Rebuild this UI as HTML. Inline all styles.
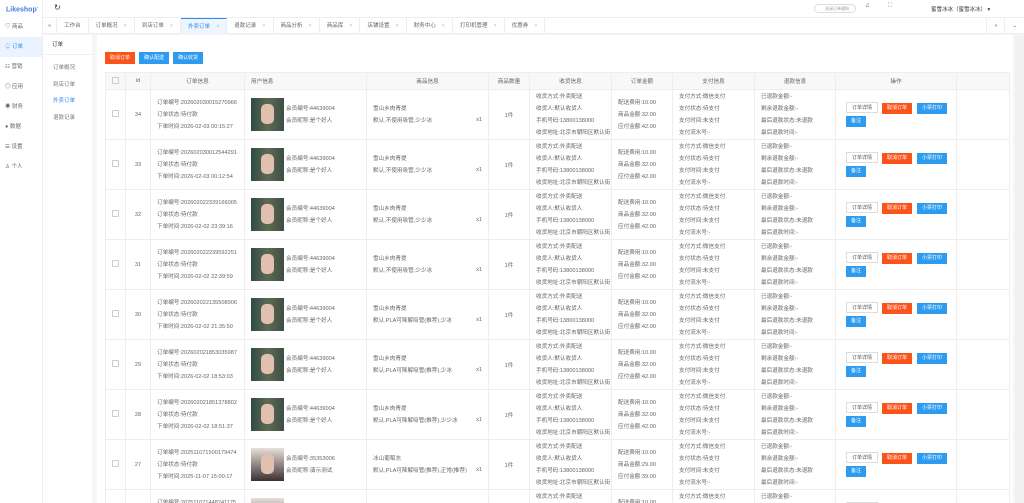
<!DOCTYPE html><html style="height:503px;overflow:hidden"><head><meta charset="utf-8"><style>
*{box-sizing:border-box;margin:0;padding:0}
body{width:1024px;height:503px;overflow:hidden;background:#f5f6f8;font-family:"Liberation Sans","Noto Sans CJK SC",sans-serif;color:#555;font-size:5.5px;position:relative}
.abs{position:absolute}
#side{left:0;top:0;width:43px;height:503px;background:#fff;border-right:1px solid #eee}
#side .logo{height:17px;color:#4a7ae0;font-weight:bold;font-size:7px;padding:5px 0 0 6px}
#side .it{height:20px;line-height:20px;padding-left:5px;color:#666;font-size:5.5px}
#side .it.on{background:#eaf3ff;color:#2d8cf0}
#top{left:43px;top:0;right:0;height:17px;background:#fff}
#tabs{left:43px;top:17px;right:0;height:17px;background:#fff;border-top:1px solid #eee;border-bottom:1px solid #eee;display:flex}
#tabs div{height:16px;line-height:16px;padding:0 7px;border-right:1px solid #eee;color:#666;font-size:5.5px;white-space:nowrap}
#tabs div.on{color:#2d8cf0;background:#eef5ff;border-top:1px solid #2d8cf0}
#tabs span{color:#bbb;margin-left:6px}
#sub{left:43px;top:35px;width:49px;height:468px;background:#fff}
#sub .h{height:20px;line-height:20px;padding-left:9px;color:#333;border-bottom:1px solid #f0f0f0}
#sub .s{height:16.5px;line-height:16.5px;padding-left:10px;color:#777}
#main{left:97px;top:35px;width:916px;height:468px;background:#fff}
#sb{left:1015px;top:35px;width:9px;height:468px;background:#f1f1f1}
.btn{position:absolute;height:12px;line-height:12px;color:#fff;font-size:5px;padding:0 5px}
#wrap{position:absolute;left:0;top:0;width:1024px;height:503px;overflow:hidden}
table{position:absolute;left:105px;top:72px;border-collapse:collapse;table-layout:fixed;width:904px}
td,th{border:1px solid #eee;font-weight:normal;font-size:5.6px;color:#666;vertical-align:middle;white-space:nowrap;overflow:hidden}
th{background:#f8f8f9;height:17px;text-align:center;color:#666}
td{height:50px}
.l{line-height:12px;padding-left:6px}
.cb{display:inline-block;width:7px;height:7px;border:1px solid #ccc;border-radius:1px}
.av{display:inline-block;width:33px;height:33px;background:linear-gradient(90deg,#2f4a48,#5e6a52 50%,#3e4e46);vertical-align:middle;position:relative}
.av i{position:absolute;left:10px;top:6px;width:13px;height:20px;background:#e2c0b0;border-radius:5px}
.op span{display:inline-block;height:11px;line-height:11px;padding:0 5px;font-size:5px;color:#fff;margin:1px 0}
</style></head><body>
<div id="wrap">
<div id="side" class="abs"><div class="logo">Likeshop<sup style="font-size:3px">+</sup></div>
<div class="it">♡ 商品</div><div class="it on">♤ 订单</div><div class="it">☷ 营销</div><div class="it">◎ 应用</div><div class="it">◉ 财务</div><div class="it">● 数据</div><div class="it">☰ 设置</div><div class="it">♙ 个人</div></div>
<div id="top" class="abs"><span class="abs" style="left:11px;top:3px;font-size:8px;color:#333">↻</span>
<span class="abs" style="left:771px;top:4px;width:42px;height:9px;border:1px solid #ddd;border-radius:5px;font-size:4px;line-height:8px;padding-left:10px;color:#999;white-space:nowrap">关闭订单通知</span>
<span class="abs" style="left:822px;top:3px;font-size:6px;color:#555">♫</span><span class="abs" style="left:845px;top:3px;font-size:6px;color:#888">⛶</span>
<span class="abs" style="left:888px;top:5px;font-size:5.5px;color:#333;white-space:nowrap">蜜雪冰冰（蜜雪冰冰） ▾</span></div>
<div id="tabs" class="abs"><div style="padding:0 5px">«</div><div>工作台</div><div>订单概况<span>×</span></div><div>到店订单<span>×</span></div><div class="on">外卖订单<span>×</span></div><div>退款记录<span>×</span></div><div>商品分析<span>×</span></div><div>商品库<span>×</span></div><div>店铺设置<span>×</span></div><div>财务中心<span>×</span></div><div>打印机管理<span>×</span></div><div>优惠券<span>×</span></div>
<div style="margin-left:auto;border-left:1px solid #eee">»</div><div style="border-right:0">⌄</div></div>
<div id="sub" class="abs"><div class="h">订单</div><div style="height:5px"></div><div class="s">订单概况</div><div class="s">到店订单</div><div class="s" style="color:#2d8cf0">外卖订单</div><div class="s">退款记录</div></div>
<div id="main" class="abs"></div><div id="sb" class="abs"></div>
<div class="btn" style="left:105px;top:52px;background:#fa541c">取消订单</div>
<div class="btn" style="left:139px;top:52px;background:#2d9cf0">确认配送</div>
<div class="btn" style="left:173px;top:52px;background:#2d9cf0">确认收货</div>
<table id="t"><colgroup><col style="width:20px"><col style="width:25px"><col style="width:94px"><col style="width:122px"><col style="width:122px"><col style="width:41px"><col style="width:82px"><col style="width:61px"><col style="width:82px"><col style="width:81px"><col style="width:121px"><col style="width:53px"></colgroup>
<tr><th><span class="cb"></span></th><th>id</th><th>订单信息</th><th style="text-align:left;padding-left:6px">用户信息</th><th>商品信息</th><th>商品数量</th><th>收货信息</th><th>订单金额</th><th>支付信息</th><th>退款信息</th><th>操作</th><th></th></tr>
</table>
</div>
<script>
var d=[[34,"202602030015270966","2026-02-03 00:15:27","默认,不使用吸管,少少冰"],[33,"202602030012544291","2026-02-03 00:12:54","默认,不使用吸管,少少冰"],[32,"202602022339166005","2026-02-02 23:39:16","默认,不使用吸管,少少冰"],[31,"202602022239592251","2026-02-02 22:39:59","默认,不使用吸管,少少冰"],[30,"202602022135508906","2026-02-02 21:35:50","默认,PLA可降解吸管(推荐),少冰"],[29,"202602021853035987","2026-02-02 18:53:03","默认,PLA可降解吸管(推荐),少冰"],[28,"202602021851378802","2026-02-02 18:51:37","默认,PLA可降解吸管(推荐),少少冰"],[27,"202511071500179474","2025-11-07 15:00:17","默认,PLA可降解吸管(推荐),正常(推荐)"],[26,"202511071448241175","2025-11-07 14:48:24","默认,PLA可降解吸管(推荐),正常(推荐)"]];
var h="";d.forEach(function(r){var g=r[0]<=27;h+='<tr><td style="text-align:center"><span class="cb"></span></td><td style="text-align:center">'+r[0]+'</td><td class="l">订单编号:'+r[1]+'<br>订单状态:待付款<br>下单时间:'+r[2]+'</td><td style="padding-left:6px"><span class="av" style="'+(g?'background:linear-gradient(#e8e0dc,#3a3030)':'')+'"><i></i></span><span style="display:inline-block;vertical-align:middle;line-height:12px;margin-left:2px">会员编号:'+(g?'35353006':'44639004')+'<br>会员昵称:'+(g?'演示测试':'是个好人')+'</span></td><td class="l" style="position:relative">'+(g?'冰山葡萄冻':'雪山乡肉青提')+'<br>'+r[3]+'<span style="position:absolute;right:6px;bottom:13px">x1</span></td><td style="text-align:center">1件</td><td class="l">收货方式:外卖配送<br>收货人:默认收货人<br>手机号码:13800138000<br>收货地址:北京市朝阳区默认街</td><td class="l">配送费用:10.00<br>商品金额:'+(g?'29.00':'32.00')+'<br>应付金额:'+(g?'39.00':'42.00')+'</td><td class="l">支付方式:微信支付<br>支付状态:待支付<br>支付时间:未支付<br>支付流水号:-</td><td class="l">已退款金额:-<br>剩余退款金额:-<br>最后退款状态:未退款<br>最后退款时间:-</td><td class="op" style="padding-left:10px"><span style="color:#555;border:1px solid #ddd;background:#fff">订单详情</span><span style="background:#fa541c;margin-left:4px">取消订单</span><span style="background:#2d9cf0;margin-left:5px">小票打印</span><br><span style="background:#2d9cf0">备注</span></td><td></td></tr>'});
document.getElementById("t").insertAdjacentHTML("beforeend",h);
</script>
</body></html>
